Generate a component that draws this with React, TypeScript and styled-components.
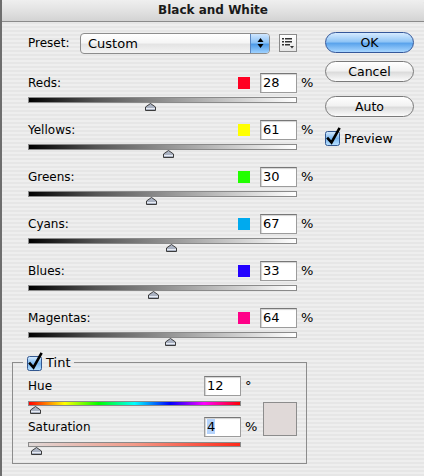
import React from 'react';
import styled, { createGlobalStyle } from 'styled-components';

const GlobalStyle = createGlobalStyle`
  html, body {
    margin: 0;
    padding: 0;
  }
  body {
    font-family: "DejaVu Sans", "Liberation Sans", sans-serif;
    font-size: 12px;
    color: #000;
  }
`;

const Window = styled.div`
  width: 424px;
  height: 476px;
  box-sizing: border-box;
  border-left: 2px solid #6e6e6e;
  background: repeating-linear-gradient(180deg, #eeeeee 0px, #eeeeee 2px, #e6e6e6 2px, #e6e6e6 4px);
  overflow: hidden;
  display: flex;
  flex-direction: column;
`;

const TitleBar = styled.div`
  height: 21px;
  border-bottom: 1px solid #8a8a8a;
  background: linear-gradient(180deg, #efefef 0%, #e2e2e2 50%, #d3d3d3 100%);
  border-top-left-radius: 5px;
  border-top-right-radius: 5px;
  text-align: center;
  line-height: 21px;
  font-weight: bold;
  font-size: 12px;
  color: #1a1a1a;
`;

const Body = styled.div`
  display: flex;
  padding-top: 10px;
`;

const Main = styled.div`
  width: 295px;
  margin-left: 10px;
  display: flex;
  flex-direction: column;
`;

const PresetRow = styled.div`
  display: flex;
  align-items: center;
  height: 22px;
  padding-left: 16px;
`;

const PresetLabel = styled.div`
  width: 52px;
  font-size: 12px;
`;

const Select = styled.div`
  width: 190px;
  height: 21px;
  box-sizing: border-box;
  border: 1px solid #8d8d8d;
  border-radius: 4px;
  background: linear-gradient(180deg, #ffffff 0%, #f6f6f6 45%, #e4e4e4 55%, #f4f4f4 100%);
  display: flex;
  align-items: center;
  overflow: hidden;
`;

const SelectText = styled.div`
  flex: 1;
  padding-left: 7px;
  font-size: 13px;
`;

const Stepper = styled.div`
  width: 18px;
  height: 100%;
  border-left: 1px solid #5a86c0;
  background: linear-gradient(180deg, #cfe6ff 0%, #8cc2f6 45%, #4f9be8 55%, #9fd2ff 100%);
  display: flex;
  align-items: center;
  justify-content: center;
`;

const MenuButton = styled.div`
  width: 18px;
  height: 18px;
  margin-left: 9px;
  box-sizing: border-box;
  border: 1px solid #8a8a8a;
  background: linear-gradient(180deg, #ffffff 0%, #e6e6e6 100%);
  display: flex;
  align-items: center;
  justify-content: center;
`;

const Channels = styled.div`
  margin-top: 18px;
  display: flex;
  flex-direction: column;
`;

const ChannelBlock = styled.div`
  height: 47px;
  padding-left: 16px;
`;

const TopRow = styled.div<{ $height: number; $width: number }>`
  display: flex;
  align-items: center;
  width: ${(p) => p.$width}px;
  height: ${(p) => p.$height}px;
`;

const Label = styled.div`
  flex: 1;
  font-size: 12px;
`;

const ColorChip = styled.div<{ $color: string }>`
  width: 12px;
  height: 12px;
  margin-right: 10px;
  background: ${(p) => p.$color};
`;

const NumberField = styled.div`
  width: 37px;
  height: 20px;
  box-sizing: border-box;
  background: #fff;
  border: 1px solid #9c9c9c;
  border-top-color: #777;
  box-shadow: inset 1px 1px 1px rgba(0, 0, 0, 0.18);
  padding-left: 2px;
  font-size: 13px;
  line-height: 18px;
`;

const Selected = styled.span`
  background: #b5d3fb;
`;

const Unit = styled.div<{ $width: number }>`
  width: ${(p) => p.$width}px;
  box-sizing: border-box;
  padding-left: 4px;
  font-size: 13px;
  line-height: 20px;
`;

const Track = styled.div<{ $width: number; $height: number; $bg: string }>`
  width: ${(p) => p.$width}px;
  height: ${(p) => p.$height}px;
  box-sizing: border-box;
  margin-top: ${(p) => (p.$height === 6 ? 4 : 5)}px;
  border: 1px solid #8a8a8a;
  background: ${(p) => p.$bg};
`;

const ThumbZone = styled.div<{ $width: number }>`
  position: relative;
  width: ${(p) => p.$width}px;
  height: 8px;
`;

const ThumbMark = styled.svg`
  position: absolute;
  top: 0;
  display: block;
`;

const TintBox = styled.fieldset`
  margin: 1px 0 0 0;
  width: 295px;
  box-sizing: border-box;
  border: 1px solid #8c8c8c;
  padding: 6px 8px 5px 10px;
  min-width: 0;
`;

const TintLegend = styled.legend`
  display: flex;
  align-items: center;
  gap: 3px;
  padding: 0 3px 0 4px;
  height: 15px;
  font-size: 13px;
`;

const TintLayout = styled.div`
  display: flex;
  align-items: center;
  padding-left: 5px;
`;

const TintSliders = styled.div`
  width: 235px;
  display: flex;
  flex-direction: column;
`;

const TintBlock = styled.div`
  height: 41px;
`;

const TintSwatch = styled.div`
  width: 34px;
  height: 34px;
  box-sizing: border-box;
  border: 1px solid #8c8c8c;
  background: #e0d9d8;
  margin-top: 4px;
`;

const Side = styled.div`
  width: 89px;
  margin-left: 18px;
  display: flex;
  flex-direction: column;
`;

const AquaButton = styled.div<{ $primary?: boolean; $gap: number }>`
  height: 21px;
  margin-top: ${(p) => p.$gap}px;
  box-sizing: border-box;
  border-radius: 11px;
  border: 1px solid ${(p) => (p.$primary ? '#34579a' : '#7a7a7a')};
  background: ${(p) =>
    p.$primary
      ? 'linear-gradient(180deg, #d6ebff 0%, #92c6f6 45%, #5ba4ec 55%, #a8d6ff 100%)'
      : 'linear-gradient(180deg, #ffffff 0%, #f2f2f2 45%, #dcdcdc 55%, #fbfbfb 100%)'};
  display: flex;
  align-items: center;
  justify-content: center;
  font-size: 12.5px;
`;

const CheckRow = styled.div`
  display: flex;
  align-items: center;
  gap: 3px;
  margin-top: 13px;
  font-size: 12.5px;
`;

const Thumb = ({ pct }: { pct: number }) => (
  <ThumbMark width="11" height="8" viewBox="0 0 11 8" style={{ left: `calc(${pct}% - 5.5px)` }}>
    <path d="M5.5 0.5 L10.5 4 L10.5 7.5 L0.5 7.5 L0.5 4 Z" fill="#aab2c2" stroke="#3c3c3c" strokeWidth="1" />
    <line x1="1" y1="5.5" x2="10" y2="5.5" stroke="#e8ecf4" strokeWidth="1" />
  </ThumbMark>
);

const AquaCheck = () => (
  <svg width="16" height="16" viewBox="0 0 16 16" style={{ overflow: 'visible', display: 'block' }}>
    <defs>
      <linearGradient id="chk" x1="0" y1="0" x2="0" y2="1">
        <stop offset="0" stopColor="#d8ecff" />
        <stop offset="0.5" stopColor="#7cb8f0" />
        <stop offset="1" stopColor="#b8e0ff" />
      </linearGradient>
    </defs>
    <rect x="0.5" y="1.5" width="14" height="14" rx="2" fill="url(#chk)" stroke="#33578f" />
    <path d="M3 8.5 L6.5 12.5 L14 -1" fill="none" stroke="#000" strokeWidth="2.6" strokeLinecap="square" />
  </svg>
);

const channels = [
  { name: 'Reds:', color: '#ff0022', value: 28 },
  { name: 'Yellows:', color: '#ffff00', value: 61 },
  { name: 'Greens:', color: '#22ff00', value: 30 },
  { name: 'Cyans:', color: '#00aaee', value: 67 },
  { name: 'Blues:', color: '#2200ff', value: 33 },
  { name: 'Magentas:', color: '#ff0088', value: 64 },
];

const grayBar = 'linear-gradient(90deg, #000000 0%, #555555 25%, #9a9a9a 55%, #ffffff 100%)';
const hueBar =
  'linear-gradient(90deg, #ff0000 0%, #ffff00 17%, #00ff00 33%, #00ffff 50%, #0000ff 67%, #ff00ff 83%, #ff0000 100%)';
const satBar = 'linear-gradient(90deg, #e0d9d8 0%, #f29a88 50%, #ff2a1a 100%)';

export default function App() {
  return (
    <>
      <GlobalStyle />
      <Window>
        <TitleBar>Black and White</TitleBar>
        <Body>
          <Main>
            <PresetRow>
              <PresetLabel>Preset:</PresetLabel>
              <Select>
                <SelectText>Custom</SelectText>
                <Stepper>
                  <svg width="7" height="12" viewBox="0 0 7 12">
                    <path d="M3.5 1 L6.5 5 L0.5 5 Z" fill="#000" />
                    <path d="M3.5 11 L6.5 7 L0.5 7 Z" fill="#000" />
                  </svg>
                </Stepper>
              </Select>
              <MenuButton>
                <svg width="12" height="11" viewBox="0 0 12 11">
                  <rect x="0" y="0" width="2" height="1.5" fill="#333" />
                  <rect x="3" y="0" width="7" height="1.5" fill="#333" />
                  <rect x="0" y="3" width="2" height="1.5" fill="#333" />
                  <rect x="3" y="3" width="7" height="1.5" fill="#333" />
                  <rect x="0" y="6" width="2" height="1.5" fill="#333" />
                  <rect x="3" y="6" width="5" height="1.5" fill="#333" />
                  <path d="M8 8 L12 8 L10 10.5 Z" fill="#333" />
                </svg>
              </MenuButton>
            </PresetRow>
            <Channels>
              {channels.map((c) => (
                <ChannelBlock key={c.name}>
                  <TopRow $height={21} $width={285}>
                    <Label>{c.name}</Label>
                    <ColorChip $color={c.color} />
                    <NumberField>{c.value}</NumberField>
                    <Unit $width={16}>%</Unit>
                  </TopRow>
                  <Track $width={269} $height={6} $bg={grayBar} />
                  <ThumbZone $width={269}>
                    <Thumb pct={((c.value + 200) / 500) * 100} />
                  </ThumbZone>
                </ChannelBlock>
              ))}
            </Channels>
            <TintBox>
              <TintLegend>
                <AquaCheck />
                <span>Tint</span>
              </TintLegend>
              <TintLayout>
                <TintSliders>
                  <TintBlock>
                    <TopRow $height={20} $width={235}>
                      <Label>Hue</Label>
                      <NumberField>12</NumberField>
                      <Unit $width={22}>°</Unit>
                    </TopRow>
                    <Track $width={213} $height={5} $bg={hueBar} />
                    <ThumbZone $width={213}>
                      <Thumb pct={(12 / 360) * 100} />
                    </ThumbZone>
                  </TintBlock>
                  <TintBlock>
                    <TopRow $height={20} $width={235}>
                      <Label>Saturation</Label>
                      <NumberField>
                        <Selected>4</Selected>
                      </NumberField>
                      <Unit $width={22}>%</Unit>
                    </TopRow>
                    <Track $width={213} $height={5} $bg={satBar} />
                    <ThumbZone $width={213}>
                      <Thumb pct={4} />
                    </ThumbZone>
                  </TintBlock>
                </TintSliders>
                <TintSwatch />
              </TintLayout>
            </TintBox>
          </Main>
          <Side>
            <AquaButton $primary $gap={0}>OK</AquaButton>
            <AquaButton $gap={8}>Cancel</AquaButton>
            <AquaButton $gap={14}>Auto</AquaButton>
            <CheckRow>
              <AquaCheck />
              <span>Preview</span>
            </CheckRow>
          </Side>
        </Body>
      </Window>
    </>
  );
}
